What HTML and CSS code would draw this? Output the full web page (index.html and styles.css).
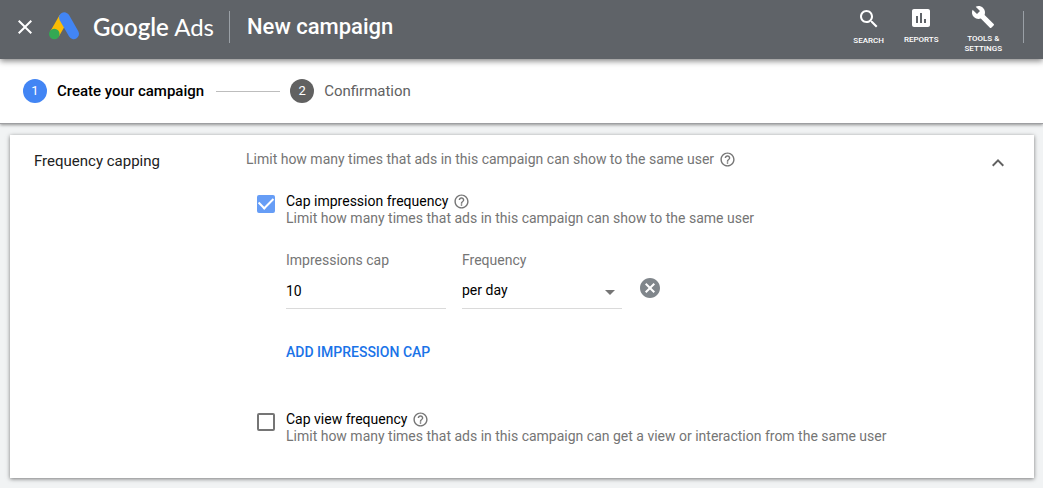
FILE: index.html
```html
<!DOCTYPE html>
<html lang="en">
<head>
  <meta charset="UTF-8">
  <meta name="viewport" content="width=device-width, initial-scale=1">
  <title>New campaign - Google Ads</title>
  <link rel="stylesheet" href="styles.css">
</head>
<body>

  <!-- shared icons -->
  <svg class="sprite" aria-hidden="true">
    <symbol id="help" viewBox="0 0 24 24">
      <path d="M11 18h2v-2h-2v2zm1-16C6.48 2 2 6.48 2 12s4.48 10 10 10 10-4.48 10-10S17.52 2 12 2zm0 18c-4.41 0-8-3.59-8-8s3.59-8 8-8 8 3.59 8 8-3.59 8-8 8zm0-14c-2.21 0-4 1.79-4 4h2c0-1.1.9-2 2-2s2 .9 2 2c0 2-3 1.75-3 5h2c0-2.25 3-2.5 3-5 0-2.21-1.79-4-4-4z"/>
    </symbol>
  </svg>

  <header class="topbar">
    <button class="close" type="button" aria-label="Close">
      <svg viewBox="0 0 24 24" width="24" height="24"><path d="M19 6.41L17.59 5 12 10.59 6.41 5 5 6.41 10.59 12 5 17.59 6.41 19 12 13.41 17.59 19 19 17.59 13.41 12z"/></svg>
    </button>
    <svg class="logo" viewBox="0 0 30 28" width="30" height="28" aria-hidden="true">
      <path d="M15 5.500L5.500 22" stroke="#fbbc04" stroke-width="10"/>
      <path d="M15.300 5.500L24.700 21.900" stroke="#4285f4" stroke-width="10.600" stroke-linecap="round"/>
      <circle cx="5.300" cy="22" r="5.300" fill="#34a853"/>
    </svg>
    <span class="brand"><b>Google</b> Ads</span>
    <h1 class="page-title">New campaign</h1>

    <nav class="tools">
      <button class="tool search" type="button">
        <svg viewBox="0 0 24 24" width="24" height="24"><path d="M15.500 14h-.79l-.28-.27C15.410 12.590 16 11.110 16 9.500 16 5.910 13.090 3 9.500 3S3 5.910 3 9.500 5.910 16 9.500 16c1.610 0 3.090-.59 4.230-1.570l.27.28v.79l5 4.990L20.490 19l-4.990-5zm-6 0C7.010 14 5 11.990 5 9.500S7.010 5 9.500 5 14 7.010 14 9.500 11.990 14 9.500 14z"/></svg>
        <span>SEARCH</span>
      </button>
      <button class="tool reports" type="button">
        <svg viewBox="0 0 24 24" width="24" height="24"><path d="M19 3H5c-1.100 0-2 .9-2 2v14c0 1.100.9 2 2 2h14c1.100 0 2-.9 2-2V5c0-1.100-.9-2-2-2zM9 17H7v-7h2v7zm4 0h-2V7h2v10zm4 0h-2v-4h2v4z"/></svg>
        <span>REPORTS</span>
      </button>
      <button class="tool settings" type="button">
        <svg viewBox="0 0 24 24" width="24" height="24"><path d="M22.700 19l-9.100-9.100c.9-2.300.4-5-1.500-6.900-2-2-5-2.400-7.400-1.300L9 6 6 9 1.600 4.700C.4 7.100.9 10.100 2.900 12.100c1.900 1.900 4.600 2.400 6.900 1.500l9.100 9.100c.4.4 1 .4 1.400 0l2.300-2.300c.5-.4.5-1.100.1-1.400z"/></svg>
        <span>TOOLS &amp;<br>SETTINGS</span>
      </button>
    </nav>
  </header>

  <ol class="steps">
    <li class="step active"><span class="num">1</span>Create your campaign</li>
    <li class="step"><span class="num">2</span>Confirmation</li>
  </ol>

  <main class="card">
    <h2 class="card-title">Frequency capping</h2>

    <div class="card-body">
      <p class="intro">Limit how many times that ads in this campaign can show to the same user <svg class="help"><use href="#help"/></svg></p>

      <div class="option">
        <input type="checkbox" id="cap-impression" checked>
        <div class="option-text">
          <label for="cap-impression">Cap impression frequency <svg class="help"><use href="#help"/></svg></label>
          <p>Limit how many times that ads in this campaign can show to the same user</p>
        </div>
      </div>

      <div class="fields">
        <div class="field">
          <label for="impressions">Impressions cap</label>
          <input type="text" id="impressions" value="10">
        </div>
        <div class="field">
          <label for="frequency">Frequency</label>
          <div class="select">
            <select id="frequency">
              <option>per day</option>
              <option>per week</option>
              <option>per month</option>
            </select>
          </div>
        </div>
        <button class="remove" type="button" aria-label="Remove cap">
          <svg viewBox="0 0 24 24" width="24" height="24"><path d="M12 2C6.470 2 2 6.470 2 12s4.470 10 10 10 10-4.470 10-10S17.530 2 12 2zm5 13.590L15.590 17 12 13.410 8.410 17 7 15.590 10.590 12 7 8.410 8.410 7 12 10.590 15.590 7 17 8.410 13.410 12 17 15.590z"/></svg>
        </button>
      </div>

      <button class="add" type="button">ADD IMPRESSION CAP</button>

      <div class="option">
        <input type="checkbox" id="cap-view">
        <div class="option-text">
          <label for="cap-view">Cap view frequency <svg class="help"><use href="#help"/></svg></label>
          <p>Limit how many times that ads in this campaign can get a view or interaction from the same user</p>
        </div>
      </div>
    </div>

    <button class="collapse" type="button" aria-label="Collapse">
      <svg viewBox="0 0 24 24" width="24" height="24"><path d="M12 8l-6 6 1.410 1.410L12 10.830l4.590 4.580L18 14z"/></svg>
    </button>
  </main>

</body>
</html>
```
FILE: styles.css
```css
* {
  box-sizing: border-box;
}

body {
  margin: 0;
  background: #f1f3f4;
  font-family: Roboto, Arial, sans-serif;
  font-size: 14px;
  line-height: 17px;
  color: #000;
}

h1, h2, p, ol {
  margin: 0;
  padding: 0;
}

button {
  padding: 0;
  border: 0;
  background: none;
  font-family: inherit;
  cursor: pointer;
}

svg {
  display: block;
}

.sprite {
  position: absolute;
  width: 0;
  height: 0;
}

/* Top bar */
.topbar {
  position: relative;
  z-index: 2;
  display: flex;
  align-items: center;
  height: 59px;
  padding: 0 19px 5px 13px;
  background: #5f6368;
  box-shadow: 0 2px 6px rgba(0, 0, 0, 0.5);
  color: #fff;
  fill: #fff;
}

.logo {
  margin: 0 14px 2px 12px;
  overflow: visible;
  fill: none;
}

.brand {
  font-family: Lato, sans-serif;
  font-size: 24px;
  line-height: 32px;
}

.brand b {
  font-weight: 600;
}

.page-title {
  margin-left: 15px;
  padding-left: 17px;
  border-left: 1px solid #9aa0a6;
  font-size: 22px;
  font-weight: 500;
  line-height: 32px;
}

.tools {
  display: flex;
  gap: 20px;
  height: 32px;
  margin-left: auto;
  padding-right: 21px;
  border-right: 1px solid #9aa0a6;
}

.tool {
  display: flex;
  flex-direction: column;
  align-items: center;
  align-self: flex-start;
  margin-top: -5px;
  color: #fff;
  font-size: 8px;
  font-weight: 500;
  line-height: 10px;
}

.tool svg {
  margin-bottom: 5px;
}

.search {
  margin-top: -4px;
}

.settings {
  margin: -6px 0 0 6px;
}

/* Steps */
.steps {
  display: flex;
  align-items: center;
  height: 65px;
  padding: 0 23px;
  background: #fff;
  border-bottom: 1px solid #9e9fa2;
  box-shadow: 0 1px 3px rgba(0, 0, 0, 0.4);
  list-style: none;
}

.step {
  display: flex;
  align-items: center;
  color: #616161;
  font-size: 15px;
}

.step.active {
  color: #000;
  font-weight: 500;
}

.step.active::after {
  content: "";
  width: 64px;
  height: 1px;
  margin: 0 10px 0 12px;
  background: #bdbdbd;
}

.num {
  width: 24px;
  height: 24px;
  margin-right: 10px;
  border-radius: 50%;
  background: #616161;
  color: #fff;
  font-size: 13px;
  font-weight: 400;
  line-height: 24px;
  text-align: center;
}

.active .num {
  background: #4285f4;
}

/* Card */
.card {
  display: flex;
  align-items: flex-start;
  margin: 11px 9px 10px 10px;
  padding: 16px 24px 33px;
  background: #fff;
  box-shadow: 0 1px 4px rgba(0, 0, 0, 0.5);
}

.card-title {
  width: 212px;
  color: #212121;
  font-size: 15px;
  font-weight: 400;
  line-height: 20px;
}

.card-body {
  flex: 1;
  color: #757575;
}

.collapse {
  fill: #616161;
}

.help {
  display: inline-block;
  width: 17px;
  height: 17px;
  margin-left: 1px;
  vertical-align: -4px;
  fill: #757575;
}

.option {
  display: flex;
  margin: 25px 0 0 11px;
}

.option-text label {
  display: block;
  color: #000;
}

.option input {
  display: grid;
  place-items: center;
  width: 18px;
  height: 18px;
  margin: 2px 11px 0 0;
  border: 2px solid #757575;
  border-radius: 2px;
  appearance: none;
}

.option input:checked {
  border-color: #669df6;
  background: #669df6;
}

.option input:checked::before {
  content: "";
  width: 12px;
  height: 7px;
  margin-bottom: 6px;
  border: solid #fff;
  border-width: 0 0 2px 2px;
  transform: rotate(-45deg);
}

.fields {
  display: flex;
  gap: 16px;
  margin: 25px 0 0 40px;
}

.field {
  width: 160px;
}

.field label {
  display: block;
}

.field input,
.field select {
  display: block;
  width: 100%;
  height: 40px;
  padding: 4px 0 0;
  border: 0;
  border-bottom: 1px solid #dadada;
  border-radius: 0;
  background: none;
  color: #000;
  font: inherit;
  appearance: none;
}

.select {
  position: relative;
}

.select::after {
  content: "";
  position: absolute;
  top: 21px;
  right: 7px;
  border: 5px solid transparent;
  border-top-color: #757575;
  border-bottom: 0;
  pointer-events: none;
}

.remove {
  align-self: flex-end;
  margin-bottom: 9px;
  fill: #80868b;
}

.add {
  display: block;
  margin: 35px 0 50px 40px;
  color: #1a73e8;
  font-size: 14px;
  font-weight: 500;
  line-height: 17px;
}
```
